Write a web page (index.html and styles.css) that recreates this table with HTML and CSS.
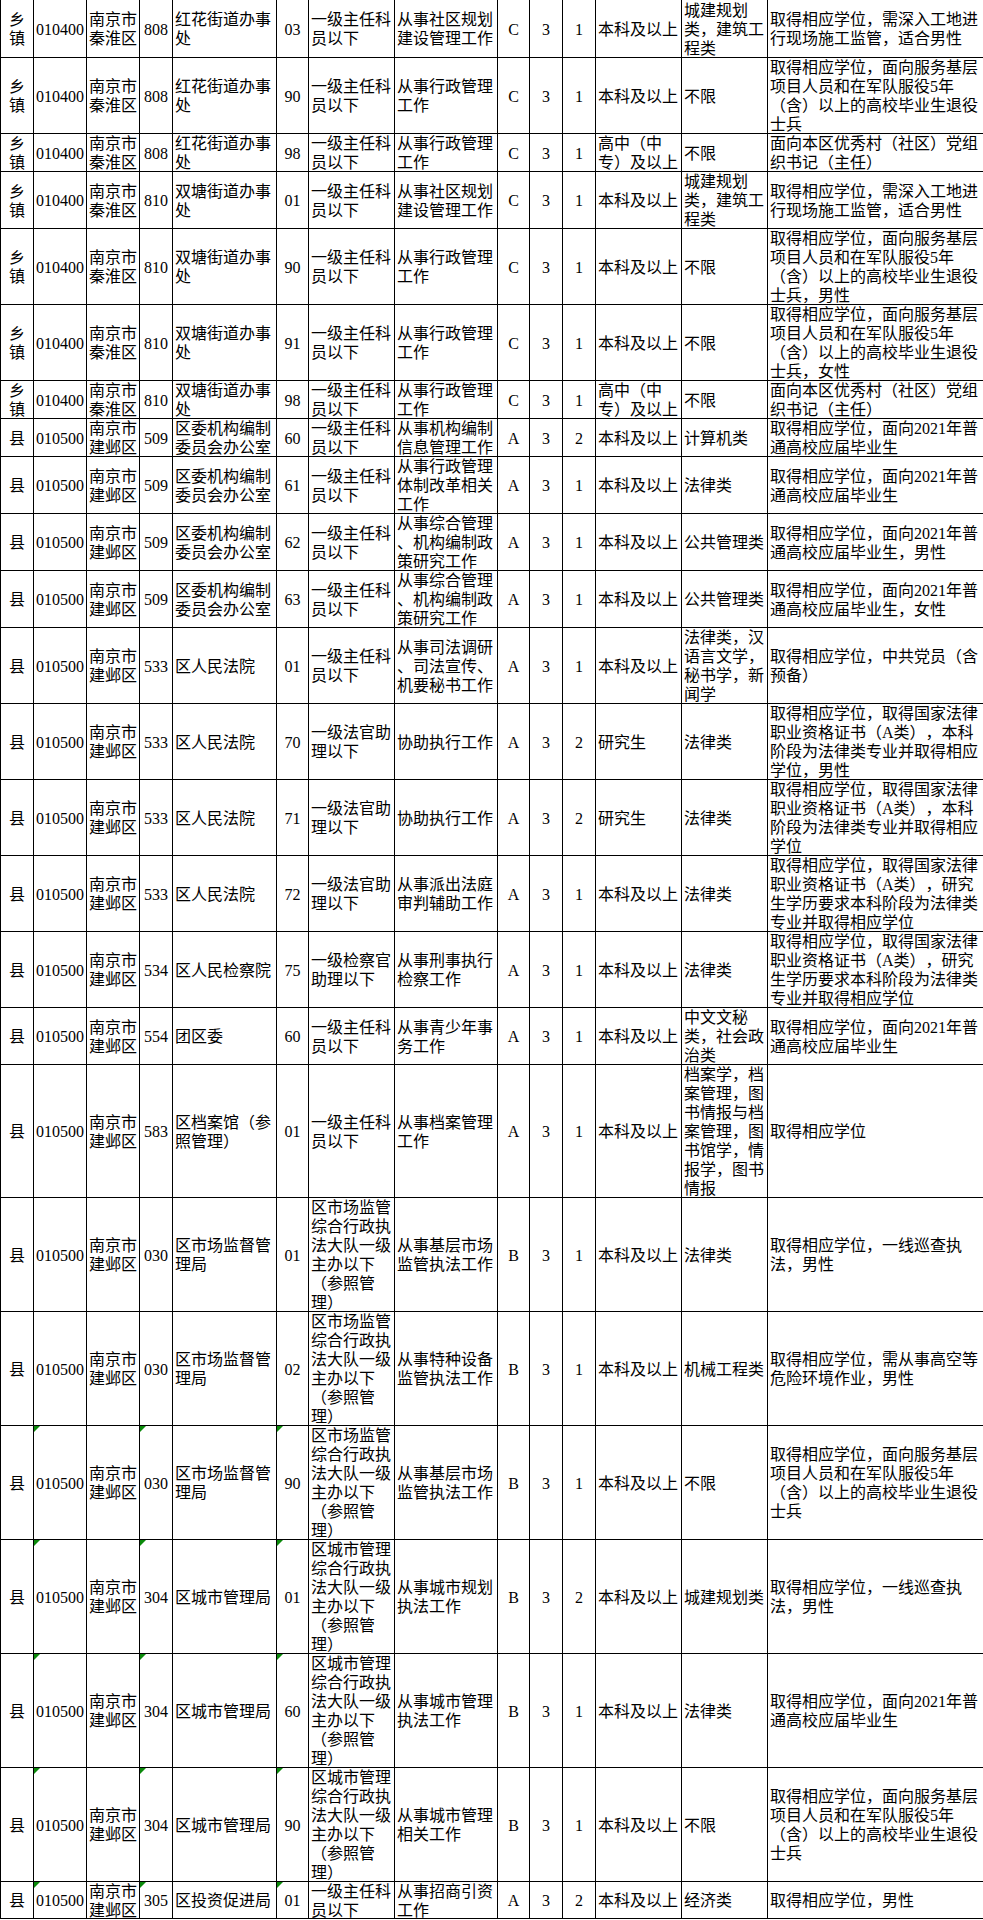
FILE: index.html
```html
<!DOCTYPE html>
<html lang="zh-CN">
<head>
<meta charset="utf-8">
<title>职位表</title>
<link rel="stylesheet" href="styles.css">
</head>
<body>
<div class="sheet">
  <div class="row first">
    <div>乡镇</div><div>010400</div><div>南京市秦淮区</div><div>808</div><div>红花街道办事处</div><div>03</div><div>一级主任科员以下</div><div>从事社区规划建设管理工作</div><div>C</div><div>3</div><div>1</div><div>本科及以上</div><div>城建规划类，建筑工程类</div><div>取得相应学位，需深入工地进行现场施工监管，适合男性</div>
  </div>
  <div class="row h4">
    <div>乡镇</div><div>010400</div><div>南京市秦淮区</div><div>808</div><div>红花街道办事处</div><div>90</div><div>一级主任科员以下</div><div>从事行政管理工作</div><div>C</div><div>3</div><div>1</div><div>本科及以上</div><div>不限</div><div>取得相应学位，面向服务基层项目人员和在军队服役5年（含）以上的高校毕业生退役士兵</div>
  </div>
  <div class="row h2">
    <div>乡镇</div><div>010400</div><div>南京市秦淮区</div><div>808</div><div>红花街道办事处</div><div>98</div><div>一级主任科员以下</div><div>从事行政管理工作</div><div>C</div><div>3</div><div>1</div><div>高中（中专）及以上</div><div>不限</div><div>面向本区优秀村（社区）党组织书记（主任）</div>
  </div>
  <div class="row h3">
    <div>乡镇</div><div>010400</div><div>南京市秦淮区</div><div>810</div><div>双塘街道办事处</div><div>01</div><div>一级主任科员以下</div><div>从事社区规划建设管理工作</div><div>C</div><div>3</div><div>1</div><div>本科及以上</div><div>城建规划类，建筑工程类</div><div>取得相应学位，需深入工地进行现场施工监管，适合男性</div>
  </div>
  <div class="row h4">
    <div>乡镇</div><div>010400</div><div>南京市秦淮区</div><div>810</div><div>双塘街道办事处</div><div>90</div><div>一级主任科员以下</div><div>从事行政管理工作</div><div>C</div><div>3</div><div>1</div><div>本科及以上</div><div>不限</div><div>取得相应学位，面向服务基层项目人员和在军队服役5年（含）以上的高校毕业生退役士兵，男性</div>
  </div>
  <div class="row h4">
    <div>乡镇</div><div>010400</div><div>南京市秦淮区</div><div>810</div><div>双塘街道办事处</div><div>91</div><div>一级主任科员以下</div><div>从事行政管理工作</div><div>C</div><div>3</div><div>1</div><div>本科及以上</div><div>不限</div><div>取得相应学位，面向服务基层项目人员和在军队服役5年（含）以上的高校毕业生退役士兵，女性</div>
  </div>
  <div class="row h2">
    <div>乡镇</div><div>010400</div><div>南京市秦淮区</div><div>810</div><div>双塘街道办事处</div><div>98</div><div>一级主任科员以下</div><div>从事行政管理工作</div><div>C</div><div>3</div><div>1</div><div>高中（中专）及以上</div><div>不限</div><div>面向本区优秀村（社区）党组织书记（主任）</div>
  </div>
  <div class="row h2">
    <div>县</div><div>010500</div><div>南京市建邺区</div><div>509</div><div>区委机构编制委员会办公室</div><div>60</div><div>一级主任科员以下</div><div>从事机构编制信息管理工作</div><div>A</div><div>3</div><div>2</div><div>本科及以上</div><div>计算机类</div><div>取得相应学位，面向2021年普通高校应届毕业生</div>
  </div>
  <div class="row h3">
    <div>县</div><div>010500</div><div>南京市建邺区</div><div>509</div><div>区委机构编制委员会办公室</div><div>61</div><div>一级主任科员以下</div><div>从事行政管理体制改革相关工作</div><div>A</div><div>3</div><div>1</div><div>本科及以上</div><div>法律类</div><div>取得相应学位，面向2021年普通高校应届毕业生</div>
  </div>
  <div class="row h3">
    <div>县</div><div>010500</div><div>南京市建邺区</div><div>509</div><div>区委机构编制委员会办公室</div><div>62</div><div>一级主任科员以下</div><div class="any">从事综合管理、机构编制政策研究工作</div><div>A</div><div>3</div><div>1</div><div>本科及以上</div><div>公共管理类</div><div>取得相应学位，面向2021年普通高校应届毕业生，男性</div>
  </div>
  <div class="row h3">
    <div>县</div><div>010500</div><div>南京市建邺区</div><div>509</div><div>区委机构编制委员会办公室</div><div>63</div><div>一级主任科员以下</div><div class="any">从事综合管理、机构编制政策研究工作</div><div>A</div><div>3</div><div>1</div><div>本科及以上</div><div>公共管理类</div><div>取得相应学位，面向2021年普通高校应届毕业生，女性</div>
  </div>
  <div class="row h4">
    <div>县</div><div>010500</div><div>南京市建邺区</div><div>533</div><div>区人民法院</div><div>01</div><div>一级主任科员以下</div><div class="any">从事司法调研、司法宣传、机要秘书工作</div><div>A</div><div>3</div><div>1</div><div>本科及以上</div><div>法律类，汉语言文学，秘书学，新闻学</div><div>取得相应学位，中共党员（含预备）</div>
  </div>
  <div class="row h4">
    <div>县</div><div>010500</div><div>南京市建邺区</div><div>533</div><div>区人民法院</div><div>70</div><div>一级法官助理以下</div><div>协助执行工作</div><div>A</div><div>3</div><div>2</div><div>研究生</div><div>法律类</div><div>取得相应学位，取得国家法律职业资格证书（A类），本科阶段为法律类专业并取得相应学位，男性</div>
  </div>
  <div class="row h4">
    <div>县</div><div>010500</div><div>南京市建邺区</div><div>533</div><div>区人民法院</div><div>71</div><div>一级法官助理以下</div><div>协助执行工作</div><div>A</div><div>3</div><div>2</div><div>研究生</div><div>法律类</div><div>取得相应学位，取得国家法律职业资格证书（A类），本科阶段为法律类专业并取得相应学位</div>
  </div>
  <div class="row h4">
    <div>县</div><div>010500</div><div>南京市建邺区</div><div>533</div><div>区人民法院</div><div>72</div><div>一级法官助理以下</div><div>从事派出法庭审判辅助工作</div><div>A</div><div>3</div><div>1</div><div>本科及以上</div><div>法律类</div><div>取得相应学位，取得国家法律职业资格证书（A类），研究生学历要求本科阶段为法律类专业并取得相应学位</div>
  </div>
  <div class="row h4">
    <div>县</div><div>010500</div><div>南京市建邺区</div><div>534</div><div>区人民检察院</div><div>75</div><div>一级检察官助理以下</div><div>从事刑事执行检察工作</div><div>A</div><div>3</div><div>1</div><div>本科及以上</div><div>法律类</div><div>取得相应学位，取得国家法律职业资格证书（A类），研究生学历要求本科阶段为法律类专业并取得相应学位</div>
  </div>
  <div class="row h3">
    <div>县</div><div>010500</div><div>南京市建邺区</div><div>554</div><div>团区委</div><div>60</div><div>一级主任科员以下</div><div>从事青少年事务工作</div><div>A</div><div>3</div><div>1</div><div>本科及以上</div><div>中文文秘类，社会政治类</div><div>取得相应学位，面向2021年普通高校应届毕业生</div>
  </div>
  <div class="row h7">
    <div>县</div><div>010500</div><div>南京市建邺区</div><div>583</div><div>区档案馆（参照管理）</div><div>01</div><div>一级主任科员以下</div><div>从事档案管理工作</div><div>A</div><div>3</div><div>1</div><div>本科及以上</div><div>档案学，档案管理，图书情报与档案管理，图书馆学，情报学，图书情报</div><div>取得相应学位</div>
  </div>
  <div class="row h6">
    <div>县</div><div>010500</div><div>南京市建邺区</div><div>030</div><div>区市场监督管理局</div><div>01</div><div>区市场监管综合行政执法大队一级主办以下（参照管理）</div><div>从事基层市场监管执法工作</div><div>B</div><div>3</div><div>1</div><div>本科及以上</div><div>法律类</div><div>取得相应学位，一线巡查执法，男性</div>
  </div>
  <div class="row h6">
    <div>县</div><div>010500</div><div>南京市建邺区</div><div>030</div><div>区市场监督管理局</div><div>02</div><div>区市场监管综合行政执法大队一级主办以下（参照管理）</div><div>从事特种设备监管执法工作</div><div>B</div><div>3</div><div>1</div><div>本科及以上</div><div>机械工程类</div><div>取得相应学位，需从事高空等危险环境作业，男性</div>
  </div>
  <div class="row h6 flagged">
    <div>县</div><div>010500</div><div>南京市建邺区</div><div>030</div><div>区市场监督管理局</div><div>90</div><div>区市场监管综合行政执法大队一级主办以下（参照管理）</div><div>从事基层市场监管执法工作</div><div>B</div><div>3</div><div>1</div><div>本科及以上</div><div>不限</div><div>取得相应学位，面向服务基层项目人员和在军队服役5年（含）以上的高校毕业生退役士兵</div>
  </div>
  <div class="row h6 flagged">
    <div>县</div><div>010500</div><div>南京市建邺区</div><div>304</div><div>区城市管理局</div><div>01</div><div>区城市管理综合行政执法大队一级主办以下（参照管理）</div><div>从事城市规划执法工作</div><div>B</div><div>3</div><div>2</div><div>本科及以上</div><div>城建规划类</div><div>取得相应学位，一线巡查执法，男性</div>
  </div>
  <div class="row h6 flagged">
    <div>县</div><div>010500</div><div>南京市建邺区</div><div>304</div><div>区城市管理局</div><div>60</div><div>区城市管理综合行政执法大队一级主办以下（参照管理）</div><div>从事城市管理执法工作</div><div>B</div><div>3</div><div>1</div><div>本科及以上</div><div>法律类</div><div>取得相应学位，面向2021年普通高校应届毕业生</div>
  </div>
  <div class="row h6 flagged">
    <div>县</div><div>010500</div><div>南京市建邺区</div><div>304</div><div>区城市管理局</div><div>90</div><div>区城市管理综合行政执法大队一级主办以下（参照管理）</div><div>从事城市管理相关工作</div><div>B</div><div>3</div><div>1</div><div>本科及以上</div><div>不限</div><div>取得相应学位，面向服务基层项目人员和在军队服役5年（含）以上的高校毕业生退役士兵</div>
  </div>
  <div class="row last flagged">
    <div>县</div><div>010500</div><div>南京市建邺区</div><div>305</div><div>区投资促进局</div><div>01</div><div>一级主任科员以下</div><div>从事招商引资工作</div><div>A</div><div>3</div><div>2</div><div>本科及以上</div><div>经济类</div><div>取得相应学位，男性</div>
  </div>
</div>
</body>
</html>
```

FILE: styles.css
```css
html, body {
  margin: 0;
  padding: 0;
  background: #ffffff;
}
body {
  width: 983px;
  overflow: hidden;
  font-family: "Liberation Serif", "Noto Sans CJK SC", serif;
  font-size: 16px;
  line-height: 19px;
  color: #000000;
  text-spacing-trim: space-all;
}
.sheet {
  border-left: 1px solid #000000;
  width: 982px;
}
.row {
  display: grid;
  grid-template-columns: 33px 53px 53px 33px 104px 32px 86px 103px 32px 33px 33px 86px 86px 215px;
  border-bottom: 1px solid #000000;
  box-sizing: border-box;
  height: 57px;
}
.row.first { height: 58px; }
.row.h2 { height: 38px; }
.row.h3 { height: 57px; }
.row.h4 { height: 76px; }
.row.h6 { height: 114px; }
.row.h7 { height: 133px; }
.row.last { height: 37px; }

.row > div {
  position: relative;
  display: flex;
  align-items: center;
  justify-content: flex-start;
  box-sizing: border-box;
  border-right: 1px solid #000000;
  padding: 1px 1px 0 2px;
  overflow: hidden;
  min-width: 0;
  word-break: break-all;
  text-spacing-trim: space-all;
}
.row > div:last-child {
  border-right: none;
}
.row > div:nth-child(1),
.row > div:nth-child(2),
.row > div:nth-child(4),
.row > div:nth-child(6),
.row > div:nth-child(9),
.row > div:nth-child(10),
.row > div:nth-child(11) {
  justify-content: center;
  text-align: center;
  padding-left: 1px;
}
.row > div.any {
  line-break: anywhere;
}
.flagged > div:nth-child(2)::before,
.flagged > div:nth-child(4)::before,
.flagged > div:nth-child(6)::before {
  content: "";
  position: absolute;
  left: 0;
  top: 0;
  width: 0;
  height: 0;
  border-top: 6px solid #0b8a0b;
  border-right: 6px solid transparent;
}
```
